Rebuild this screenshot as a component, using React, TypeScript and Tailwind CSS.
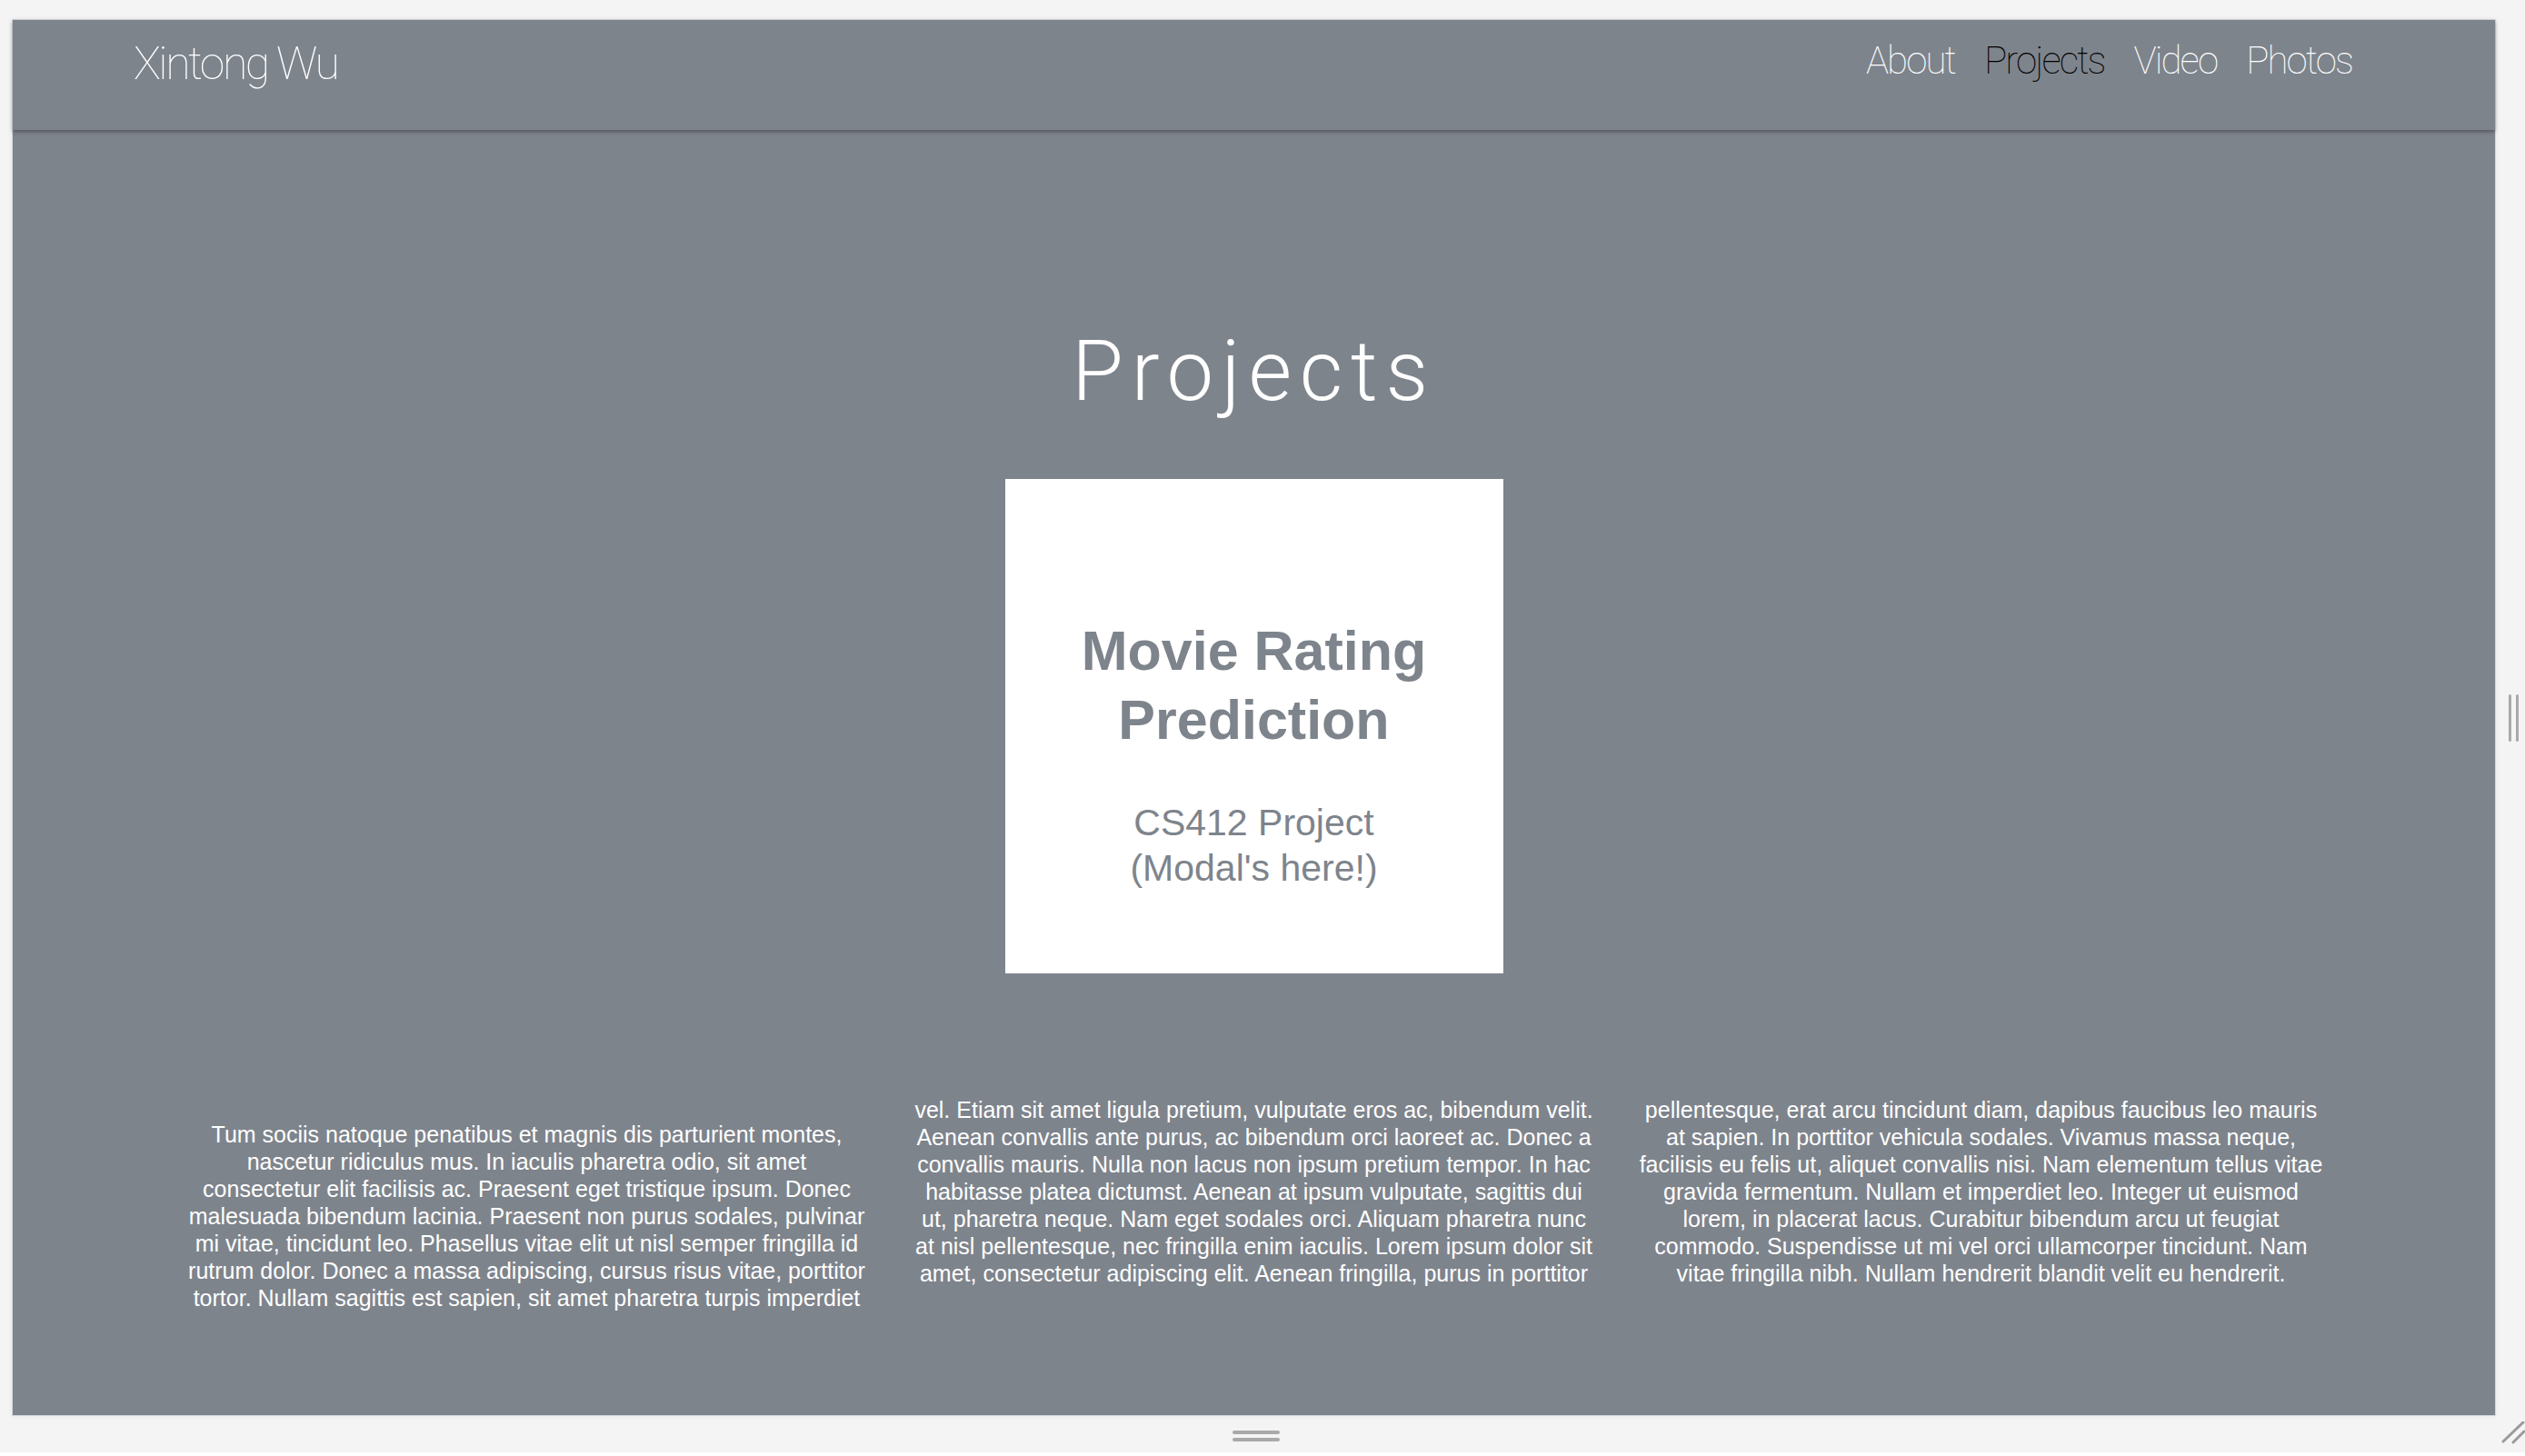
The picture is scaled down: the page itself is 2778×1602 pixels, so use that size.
import React from "react";

const col1 = [
  "Tum sociis natoque penatibus et magnis dis parturient montes,",
  "nascetur ridiculus mus. In iaculis pharetra odio, sit amet",
  "consectetur elit facilisis ac. Praesent eget tristique ipsum. Donec",
  "malesuada bibendum lacinia. Praesent non purus sodales, pulvinar",
  "mi vitae, tincidunt leo. Phasellus vitae elit ut nisl semper fringilla id",
  "rutrum dolor. Donec a massa adipiscing, cursus risus vitae, porttitor",
  "tortor. Nullam sagittis est sapien, sit amet pharetra turpis imperdiet",
];
const col2 = [
  "vel. Etiam sit amet ligula pretium, vulputate eros ac, bibendum velit.",
  "Aenean convallis ante purus, ac bibendum orci laoreet ac. Donec a",
  "convallis mauris. Nulla non lacus non ipsum pretium tempor. In hac",
  "habitasse platea dictumst. Aenean at ipsum vulputate, sagittis dui",
  "ut, pharetra neque. Nam eget sodales orci. Aliquam pharetra nunc",
  "at nisl pellentesque, nec fringilla enim iaculis. Lorem ipsum dolor sit",
  "amet, consectetur adipiscing elit. Aenean fringilla, purus in porttitor",
];
const col3 = [
  "pellentesque, erat arcu tincidunt diam, dapibus faucibus leo mauris",
  "at sapien. In porttitor vehicula sodales. Vivamus massa neque,",
  "facilisis eu felis ut, aliquet convallis nisi. Nam elementum tellus vitae",
  "gravida fermentum. Nullam et imperdiet leo. Integer ut euismod",
  "lorem, in placerat lacus. Curabitur bibendum arcu ut feugiat",
  "commodo. Suspendisse ut mi vel orci ullamcorper tincidunt. Nam",
  "vitae fringilla nibh. Nullam hendrerit blandit velit eu hendrerit.",
];

function Column({ lines, extra }: { lines: string[]; extra: string }) {
  return (
    <div className={`w-[800px] flex flex-col items-center ${extra}`}>
      {lines.map((l, i) => (
        <span key={i} className="whitespace-nowrap leading-[30px]">
          {l}
        </span>
      ))}
    </div>
  );
}

export default function App() {
  return (
    <div className="w-[2778px] h-[1602px] bg-[#f4f4f4] flex flex-col overflow-hidden relative">
      <div className="flex flex-row pt-[21px] pl-[13px]">
        <main className="w-[2733px] h-[1537px] bg-[#7e848c] border border-[#d4d6da] flex flex-col shadow-[0_0_6px_rgba(0,0,0,0.06)]">
          <header className="h-[121px] shrink-0 flex flex-row justify-between items-start pt-[23px] pl-[133px] pr-[157px] shadow-[0_2px_4px_rgba(0,0,0,0.35)] font-['Roboto','Inter',sans-serif] font-thin">
            <div className="text-[50px] leading-none text-white tracking-[-0.05em]">Xintong Wu</div>
            <nav className="flex flex-row gap-[32px] text-[42px] leading-none tracking-[-0.045em] pt-[1px]">
              <span className="text-white">About</span>
              <span className="text-black">Projects</span>
              <span className="text-white">Video</span>
              <span className="text-white">Photos</span>
            </nav>
          </header>

          <h1 className="mt-[220px] text-center text-white text-[92px] leading-none font-light tracking-[0.095em] font-['Roboto','Inter',sans-serif]">
            Projects
          </h1>

          <div className="mt-[72px] self-center w-[548px] h-[544px] bg-white flex flex-col items-center pt-[151px] text-[#7e848c] font-['Liberation_Sans','Arial',sans-serif] text-center">
            <div className="text-[61px] leading-[76px] font-bold">
              Movie Rating
              <br />
              Prediction
            </div>
            <div className="mt-[50px] text-[41px] leading-[50px]">
              CS412 Project
              <br />
              (Modal&apos;s here!)
            </div>
          </div>

          <div className="mt-[135px] self-center w-[2400px] flex flex-row items-start text-white text-[25px] font-['Liberation_Sans','Arial',sans-serif]">
            <Column lines={col1} extra="mt-[27px]" />
            <Column lines={col2} extra="" />
            <Column lines={col3} extra="" />
          </div>
        </main>
        <div className="flex-1 flex flex-row items-center justify-center gap-[5px] pl-[6px]">
          <div className="w-[3px] h-[52px] rounded-full bg-[#a9a9a9]" />
          <div className="w-[3px] h-[52px] rounded-full bg-[#a9a9a9]" />
        </div>
      </div>
      <div className="flex-1 flex flex-col items-center pt-[16px] pr-[14px] gap-[4px]">
        <div className="w-[52px] h-[4px] rounded-full bg-[#a9a9a9]" />
        <div className="w-[52px] h-[4px] rounded-full bg-[#a9a9a9]" />
      </div>
      <div className="h-[4px] bg-white" />
      <svg
        className="absolute right-0 bottom-[12px]"
        width="26"
        height="26"
        viewBox="0 0 26 26"
      >
        <line x1="2" y1="22" x2="24" y2="1" stroke="#9a9a9a" strokeWidth="3" strokeLinecap="round" />
        <line x1="13" y1="23" x2="25" y2="11" stroke="#9a9a9a" strokeWidth="3" strokeLinecap="round" />
      </svg>
    </div>
  );
}
